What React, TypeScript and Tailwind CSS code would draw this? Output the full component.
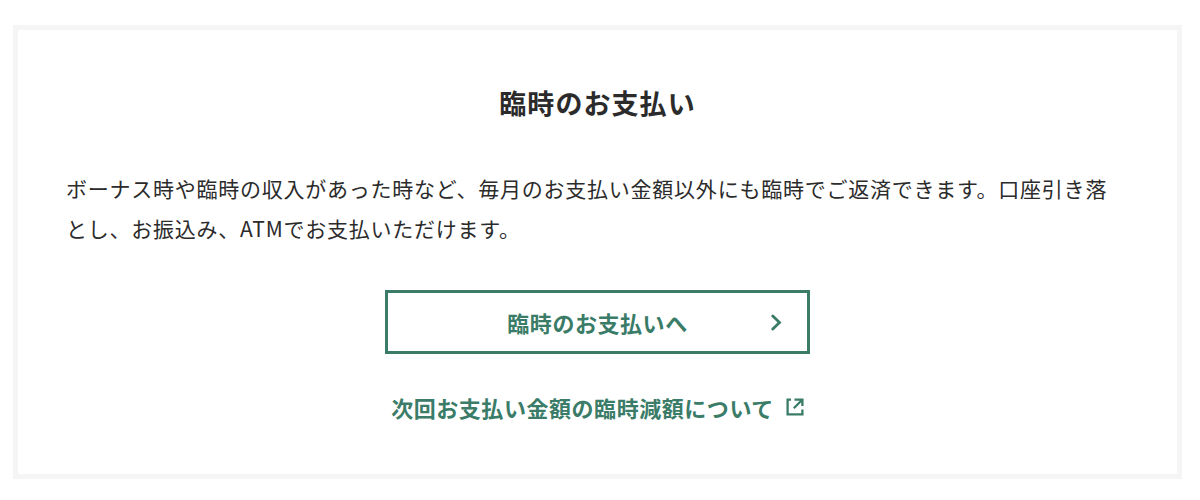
export default function App() {
  return (
    <main className="bg-white pt-[25px] pr-[18px] pb-[21px] pl-[13px] font-['Noto_Sans_CJK_JP',sans-serif] text-[#2b2b2b]">
      <section className="flex flex-col items-center border-[5px] border-[#f5f5f5] px-12 pt-[53px] pb-[49px]">
        <h2 className="text-[27px] leading-10 font-bold tracking-[0.04em]">臨時のお支払い</h2>
        <p className="mt-[45px] w-full pr-4 text-[21px] leading-10 tracking-[0.036em]">
          ボーナス時や臨時の収入があった時など、毎月のお支払い金額以外にも臨時でご返済できます。口座引き落とし、お振込み、ATMでお支払いただけます。
        </p>
        <button
          type="button"
          className="mt-[42px] grid h-16 w-full max-w-[425px] grid-cols-[1fr_auto_1fr] items-center border-[3px] border-[#3b7c68] pr-6 pl-6 text-[22px] font-bold tracking-wide text-[#3b7c68]"
        >
          <span className="col-start-2 leading-8">臨時のお支払いへ</span>
          <svg className="h-5 w-3 justify-self-end" viewBox="0 0 12 20" fill="none" stroke="currentColor" strokeWidth="2.8" strokeLinecap="round" aria-hidden="true">
            <path d="M1.8 4 8.5 10.5 1.8 17" />
          </svg>
        </button>
        <a href="#about" className="mt-[35px] flex items-center gap-3 text-[22px] leading-9 font-bold tracking-wide text-[#3b7c68]">
          次回お支払い金額の臨時減額について
          <svg className="h-[18px] w-[18px]" viewBox="0 0 18 18" fill="none" stroke="currentColor" strokeWidth="2.3" aria-hidden="true">
            <path d="M5 1.6H1.6V16.4H16.4V11.5M8.5 1.6H16.4V8M16.2 1.8 7.8 10.2" />
          </svg>
        </a>
      </section>
    </main>
  );
}
